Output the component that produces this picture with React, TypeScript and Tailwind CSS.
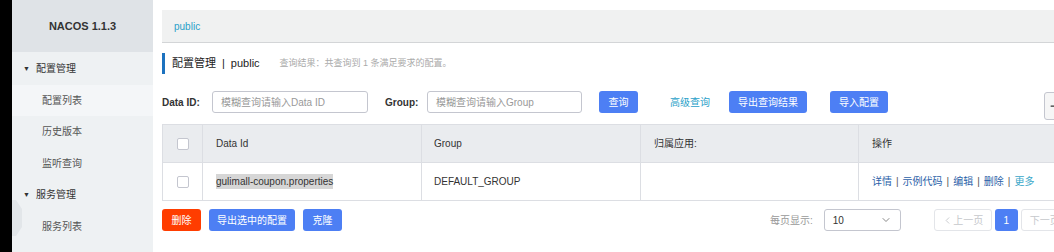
import { ChevronDown, ChevronLeft, Minus } from 'lucide-react';

const font = { fontFamily: '"Liberation Sans", "Noto Sans CJK SC", sans-serif' };

const menu = [
  { label: '配置管理', group: true },
  { label: '配置列表', active: true },
  { label: '历史版本' },
  { label: '监听查询' },
  { label: '服务管理', group: true },
  { label: '服务列表' },
];

function Btn({ children, className = '' }: { children: React.ReactNode; className?: string }) {
  return (
    <button
      className={`flex h-[22px] shrink-0 items-center justify-center whitespace-nowrap rounded-[3px] bg-[#4d7ff4] text-[10px] text-white ${className}`}
    >
      {children}
    </button>
  );
}

function Check() {
  return <div className="h-[12px] w-[12px] rounded-[2px] border border-[#c4c6cf] bg-white" />;
}

export default function App() {
  return (
    <div className="flex h-[252px] w-[1054px] overflow-hidden bg-white text-[10px] text-[#333]" style={font}>
      <div className="w-[12px] shrink-0 bg-black" />

      <aside className="relative w-[141px] shrink-0 bg-[#eef1f3]">
        <div className="flex h-[52px] items-center justify-center bg-[#dfe3e7] text-[11px] font-bold text-[#333]">
          NACOS 1.1.3
        </div>
        <nav className="flex flex-col pt-[1px]">
          {menu.map((m) =>
            m.group ? (
              <div key={m.label} className="flex h-[31.5px] items-center pl-[11px] text-[#333]">
                <span className="mr-[6px] text-[7px]">▼</span>
                {m.label}
              </div>
            ) : (
              <div
                key={m.label}
                className={`flex h-[31.5px] items-center pl-[30px] text-[#555] ${m.active ? 'bg-[#f4f6f8]' : ''}`}
              >
                {m.label}
              </div>
            )
          )}
        </nav>
        <div className="absolute left-0 top-[200px] h-[36px] w-[10px] bg-[#e2e6e9] [clip-path:polygon(0_0,40%_0,100%_25%,100%_75%,40%_100%,0_100%)]" />
      </aside>

      <main className="flex min-w-0 flex-1 flex-col overflow-hidden pl-[9px] pt-[10px]">
        <div className="flex h-[33px] shrink-0 items-center border-b border-[#d3d5d7] bg-[#f0f1f1] pl-[12px] text-[10px] text-[#2a9fc9]">
          public
        </div>

        <div className="mt-[10px] flex h-[21px] shrink-0 items-center border-l-[3px] border-[#1c72bf] pl-[7px]">
          <span className="text-[11px] text-[#222]">配置管理</span>
          <span className="mx-[6px] text-[11px] text-[#222]">|</span>
          <span className="text-[11px] text-[#222]">public</span>
          <span className="ml-[20px] text-[9px] text-[#aaa]">查询结果：共查询到 1 条满足要求的配置。</span>
        </div>

        <div className="mt-[17px] flex h-[22px] w-[920px] shrink-0 items-center">
          <span className="w-[50px] font-bold text-[#333]">Data ID:</span>
          <div className="flex h-[22px] w-[156px] items-center rounded-[3px] border border-[#c4c6cf] pl-[8px] text-[#999]">
            模糊查询请输入Data ID
          </div>
          <span className="ml-[17px] w-[42px] font-bold text-[#333]">Group:</span>
          <div className="flex h-[22px] w-[155px] items-center rounded-[3px] border border-[#c4c6cf] pl-[8px] text-[#999]">
            模糊查询请输入Group
          </div>
          <Btn className="ml-[17px] w-[39px]">查询</Btn>
          <span className="ml-[32px] whitespace-nowrap text-[#2a9fc9]">高级查询</span>
          <Btn className="ml-[19px] w-[78px]">导出查询结果</Btn>
          <Btn className="ml-[23px] w-[58px]">导入配置</Btn>
          <div className="ml-[156px] mt-[8px] flex h-[28px] w-[30px] shrink-0 items-center rounded-[3px] border border-[#c4c6cf] bg-[#f6f6f6] pl-[4px]">
            <Minus size={10} strokeWidth={3} className="text-[#333]" />
          </div>
        </div>

        <div className="mt-[11px] w-[930px] shrink-0 border border-[#dcdee3]">
          <div className="flex h-[37px] items-center bg-[#eaecef] text-[#333]">
            <div className="flex h-full w-[40px] items-center justify-center border-r border-[#dcdee3]">
              <Check />
            </div>
            <div className="flex h-full w-[219px] items-center border-r border-[#dcdee3] pl-[13px]">Data Id</div>
            <div className="flex h-full w-[219px] items-center border-r border-[#dcdee3] pl-[12px]">Group</div>
            <div className="flex h-full w-[218px] items-center border-r border-[#dcdee3] pl-[13px]">归属应用:</div>
            <div className="flex h-full flex-1 items-center pl-[13px]">操作</div>
          </div>
          <div className="flex h-[38px] items-center border-t border-[#dcdee3] bg-white text-[#333]">
            <div className="flex h-full w-[40px] items-center justify-center border-r border-[#dcdee3]">
              <Check />
            </div>
            <div className="flex h-full w-[219px] items-center border-r border-[#dcdee3] pl-[13px]">
              <span className="bg-[#d6d6d6]">gulimall-coupon.properties</span>
            </div>
            <div className="flex h-full w-[219px] items-center border-r border-[#dcdee3] pl-[12px]">DEFAULT_GROUP</div>
            <div className="h-full w-[218px] border-r border-[#dcdee3]" />
            <div className="flex h-full flex-1 items-center gap-[4px] pl-[13px]">
              <span className="text-[#2b5fa8]">详情</span>
              <span className="text-[#555]">|</span>
              <span className="text-[#2b5fa8]">示例代码</span>
              <span className="text-[#555]">|</span>
              <span className="text-[#2b5fa8]">编辑</span>
              <span className="text-[#555]">|</span>
              <span className="text-[#2b5fa8]">删除</span>
              <span className="text-[#555]">|</span>
              <span className="text-[#3aa7c9]">更多</span>
            </div>
          </div>
        </div>

        <div className="mt-[8px] flex h-[22px] w-[930px] shrink-0 items-center">
          <button className="h-[22px] w-[39px] shrink-0 whitespace-nowrap rounded-[3px] bg-[#ff3d00] text-white">删除</button>
          <Btn className="ml-[8px] w-[86px]">导出选中的配置</Btn>
          <Btn className="ml-[8px] w-[39px]">克隆</Btn>
          <span className="ml-[428px] whitespace-nowrap text-[#999]">每页显示:</span>
          <div className="ml-[11px] flex h-[22px] w-[77px] shrink-0 items-center justify-between rounded-[3px] border border-[#c4c6cf] px-[8px]">
            <span className="text-[#333]">10</span>
            <ChevronDown size={12} className="text-[#888]" />
          </div>
          <div className="ml-[33px] flex h-[22px] w-[58px] shrink-0 items-center justify-center whitespace-nowrap rounded-[3px] border border-[#e3e5e9] text-[#c6c8cc]">
            <ChevronLeft size={11} />
            上一页
          </div>
          <div className="ml-[3px] flex h-[22px] w-[23px] shrink-0 items-center justify-center rounded-[3px] bg-[#4d7ff4] text-white">
            1
          </div>
          <div className="ml-[3px] flex h-[22px] w-[57px] shrink-0 items-center whitespace-nowrap rounded-[3px] border border-[#e3e5e9] pl-[8px] text-[#c6c8cc]">
            下一页
          </div>
        </div>
      </main>
    </div>
  );
}
